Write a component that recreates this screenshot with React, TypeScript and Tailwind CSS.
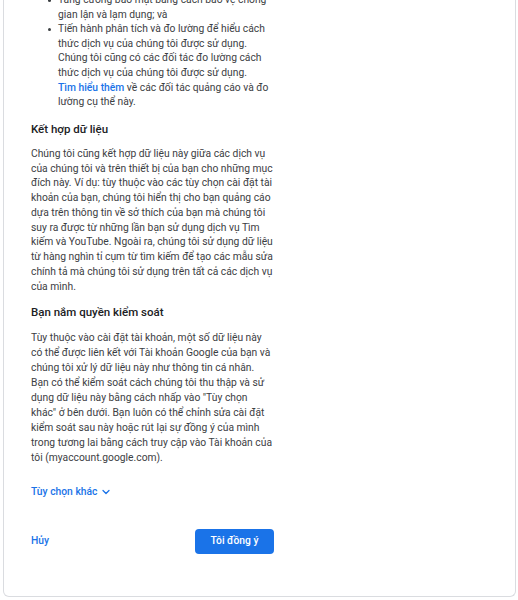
import React from 'react';
import { ChevronDown } from 'lucide-react';

const bullets: string[][] = [
  ['Tăng cường bảo mật bằng cách bảo vệ chống', 'gian lận và lạm dụng; và'],
  [
    'Tiến hành phân tích và đo lường để hiểu cách',
    'thức dịch vụ của chúng tôi được sử dụng.',
    'Chúng tôi cũng có các đối tác đo lường cách',
    'thức dịch vụ của chúng tôi được sử dụng.',
  ],
];

const combineLines = [
  'Chúng tôi cũng kết hợp dữ liệu này giữa các dịch vụ',
  'của chúng tôi và trên thiết bị của bạn cho những mục',
  'đích này. Ví dụ: tùy thuộc vào các tùy chọn cài đặt tài',
  'khoản của bạn, chúng tôi hiển thị cho bạn quảng cáo',
  'dựa trên thông tin về sở thích của bạn mà chúng tôi',
  'suy ra được từ những lần bạn sử dụng dịch vụ Tìm',
  'kiếm và YouTube. Ngoài ra, chúng tôi sử dụng dữ liệu',
  'từ hàng nghìn tỉ cụm từ tìm kiếm để tạo các mẫu sửa',
  'chính tả mà chúng tôi sử dụng trên tất cả các dịch vụ',
  'của mình.',
];

const controlLines = [
  'Tùy thuộc vào cài đặt tài khoản, một số dữ liệu này',
  'có thể được liên kết với Tài khoản Google của bạn và',
  'chúng tôi xử lý dữ liệu này như thông tin cá nhân.',
  'Bạn có thể kiểm soát cách chúng tôi thu thập và sử',
  'dụng dữ liệu này bằng cách nhấp vào "Tùy chọn',
  'khác" ở bên dưới. Bạn luôn có thể chỉnh sửa cài đặt',
  'kiểm soát sau này hoặc rút lại sự đồng ý của mình',
  'trong tương lai bằng cách truy cập vào Tài khoản của',
  'tôi (myaccount.google.com).',
];

function Lines({ lines }: { lines: string[] }) {
  return (
    <>
      {lines.map((l, i) => (
        <span key={i} className="block whitespace-nowrap">
          {l}
        </span>
      ))}
    </>
  );
}

function Bullet({ children }: { children: React.ReactNode }) {
  return (
    <div className="flex">
      <span className="w-[27px] shrink-0">
        <span className="mt-[6px] ml-[17px] block size-[3px] rounded-full bg-[#3c4043]" />
      </span>
      <div>{children}</div>
    </div>
  );
}

export default function App() {
  return (
    <div className="h-[600px] overflow-hidden bg-white font-['Roboto',sans-serif]">
      <div className="ml-[3px] w-[513px] h-[597px] rounded-b-[6px] border-x border-b border-[#dadce0] overflow-hidden">
        <div className="pl-[27px] -mt-[7px] text-[10.3px] leading-[14.6px] text-[#3c4043]">
          <Bullet>
            <Lines lines={bullets[0]} />
          </Bullet>
          <Bullet>
            <Lines lines={bullets[1]} />
            <span className="block whitespace-nowrap">
              <span className="font-medium text-[#1a73e8]">Tìm hiểu thêm</span> về các đối tác quảng cáo và đo
            </span>
            <span className="block whitespace-nowrap">lường cụ thể này.</span>
          </Bullet>

          <h2 className="mt-[11px] text-[11.5px] leading-[16px] font-medium text-[#202124]">Kết hợp dữ liệu</h2>
          <p className="mt-[10px] leading-[14.75px]">
            <Lines lines={combineLines} />
          </p>

          <h2 className="mt-[10px] text-[11.5px] leading-[16px] font-medium text-[#202124]">Bạn nắm quyền kiểm soát</h2>
          <p className="mt-[10px] leading-[15px]">
            <Lines lines={controlLines} />
          </p>

          <button className="mt-[19px] flex items-center gap-[3px] text-[10.3px] leading-[15px] font-medium text-[#1a73e8]">
            Tùy chọn khác
            <ChevronDown size={12} strokeWidth={2.5} />
          </button>

          <div className="mt-[30px] grid grid-cols-[164px_auto] items-center">
            <button className="justify-self-start text-[10.3px] font-medium text-[#1a73e8]">Hủy</button>
            <button className="w-[79px] h-[25px] rounded-[4px] bg-[#1a73e8] text-[10.3px] font-medium text-white">
              Tôi đồng ý
            </button>
          </div>
        </div>
      </div>
    </div>
  );
}
